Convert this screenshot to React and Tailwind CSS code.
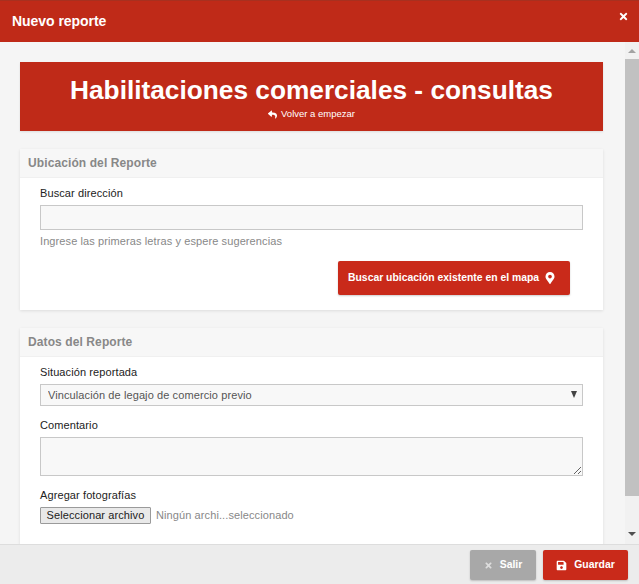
import { FaMapMarkerAlt, FaSave, FaTimes, FaReply } from 'react-icons/fa';

function Card({ title, children }) {
    return (
        <div className="bg-white shadow-[0_1px_3px_rgba(0,0,0,0.1)] mb-[18px]">
            <div className="h-[29px] bg-[#f7f7f7] border-b border-[#f0f0f0] pl-[8px] flex items-center text-[12px] font-bold text-[#888888]">
                {title}
            </div>
            <div className="px-[20px] pt-[9px]">{children}</div>
        </div>
    );
}

export default function App() {
    return (
        <div className="w-[639px] h-[584px] flex flex-col overflow-hidden bg-[#f5f5f5] text-[11px] text-[#222222] font-['Liberation_Sans',Arial,sans-serif] tracking-[0.1px]">
            {/* Header */}
            <div className="h-[42px] shrink-0 bg-[#bf2a18] border-t border-[#a8301f] flex items-center justify-between pl-[12px] pr-[10px]">
                <span className="text-[14px] font-bold text-white tracking-[-0.05px]">Nuevo reporte</span>
                <FaTimes className="text-white text-[11px] mb-[10px]" />
            </div>

            {/* Body */}
            <div className="flex-1 min-h-0 flex">
                <div className="flex-1 min-w-0 overflow-hidden pt-[20px] pl-[20px] pr-[22px]">
                    <div className="h-[69px] bg-[#bf2a18] mb-[18px] flex flex-col items-center pt-[12px] text-white shadow-[0_1px_2px_rgba(0,0,0,0.1)]">
                        <div className="text-[26.25px] leading-[32px] font-bold tracking-normal">Habilitaciones comerciales - consultas</div>
                        <div className="flex items-center gap-[4px] text-[9.5px] leading-[12px] tracking-normal mt-[2px]">
                            <FaReply className="text-[9px]" />
                            Volver a empezar
                        </div>
                    </div>

                    <Card title="Ubicación del Reporte">
                        <div className="h-[123px]">
                            <div className="leading-[13px]">Buscar dirección</div>
                            <input className="block w-full h-[25px] mt-[5px] bg-[#f8f8f8] border border-[#c8c8c8] outline-none" />
                            <div className="mt-[5px] leading-[13px] text-[#888888]">Ingrese las primeras letras y espere sugerencias</div>
                            <div className="flex justify-end pr-[13px] mt-[13px]">
                                <button className="h-[34px] w-[232px] pl-[10px] rounded-[2px] bg-[#c92a1a] text-white text-[10.4px] font-bold tracking-normal flex items-center gap-[5px] shadow-[0_1px_2px_rgba(0,0,0,0.2)]">
                                    Buscar ubicación existente en el mapa
                                    <FaMapMarkerAlt className="text-[12px]" />
                                </button>
                            </div>
                        </div>
                    </Card>

                    <Card title="Datos del Reporte">
                        <div>
                            <div className="leading-[13px]">Situación reportada</div>
                            <div className="relative mt-[5px]">
                                <select className="block w-full h-[22px] pl-[7px] appearance-none bg-[#f8f8f8] border border-[#c8c8c8] text-[#555555] text-[11px] outline-none">
                                    <option>Vinculación de legajo de comercio previo</option>
                                </select>
                                <span className="absolute right-[6px] top-[7px] w-0 h-0 border-x-[3px] border-x-transparent border-t-[7px] border-t-[#444444]" />
                            </div>
                            <div className="mt-[13px] leading-[13px]">Comentario</div>
                            <textarea className="block w-full h-[39px] mt-[5px] bg-[#f8f8f8] border border-[#c8c8c8] outline-none" />
                            <div className="mt-[13px] leading-[13px]">Agregar fotografías</div>
                            <div className="flex items-center mt-[5px] gap-[5px]">
                                <button className="w-[111px] h-[17px] bg-[#e9e9e9] border border-[#9a9a9a] rounded-[1px] text-[11px] leading-none text-[#222222]">Seleccionar archivo</button>
                                <span className="text-[#888888]">Ningún archi...seleccionado</span>
                            </div>
                            <div className="h-[60px]" />
                        </div>
                    </Card>
                </div>

                {/* Scrollbar */}
                <div className="w-[14px] shrink-0 flex flex-col items-center bg-[#f1f1f1]">
                    <div className="h-[17px] flex items-center justify-center pt-[1px]">
                        <span className="w-0 h-0 border-x-[4px] border-x-transparent border-b-[4px] border-b-[#a3a3a3]" />
                    </div>
                    <div className="w-full h-[437px] bg-[#c1c1c1]" />
                    <div className="flex-1 flex items-end justify-center pb-[8px]">
                        <span className="w-0 h-0 border-x-[4px] border-x-transparent border-t-[4px] border-t-[#505050]" />
                    </div>
                </div>
            </div>

            {/* Footer */}
            <div className="h-[40px] shrink-0 bg-[#ececec] border-t border-[#dddddd] flex items-start justify-end gap-[7px] pt-[5px] pr-[11px]">
                <button className="w-[66px] h-[30px] rounded-[2px] bg-[#a8a8a8] text-white text-[10.4px] font-bold tracking-normal flex items-center justify-center gap-[7px] shadow-[0_1px_2px_rgba(0,0,0,0.2)]">
                    <FaTimes className="text-[9px] text-[#dddddd]" />
                    Salir
                </button>
                <button className="w-[85px] h-[30px] rounded-[2px] bg-[#c92a1a] text-white text-[10.4px] font-bold tracking-normal flex items-center justify-center gap-[7px] shadow-[0_1px_2px_rgba(0,0,0,0.2)]">
                    <FaSave className="text-[11px]" />
                    Guardar
                </button>
            </div>
        </div>
    );
}
